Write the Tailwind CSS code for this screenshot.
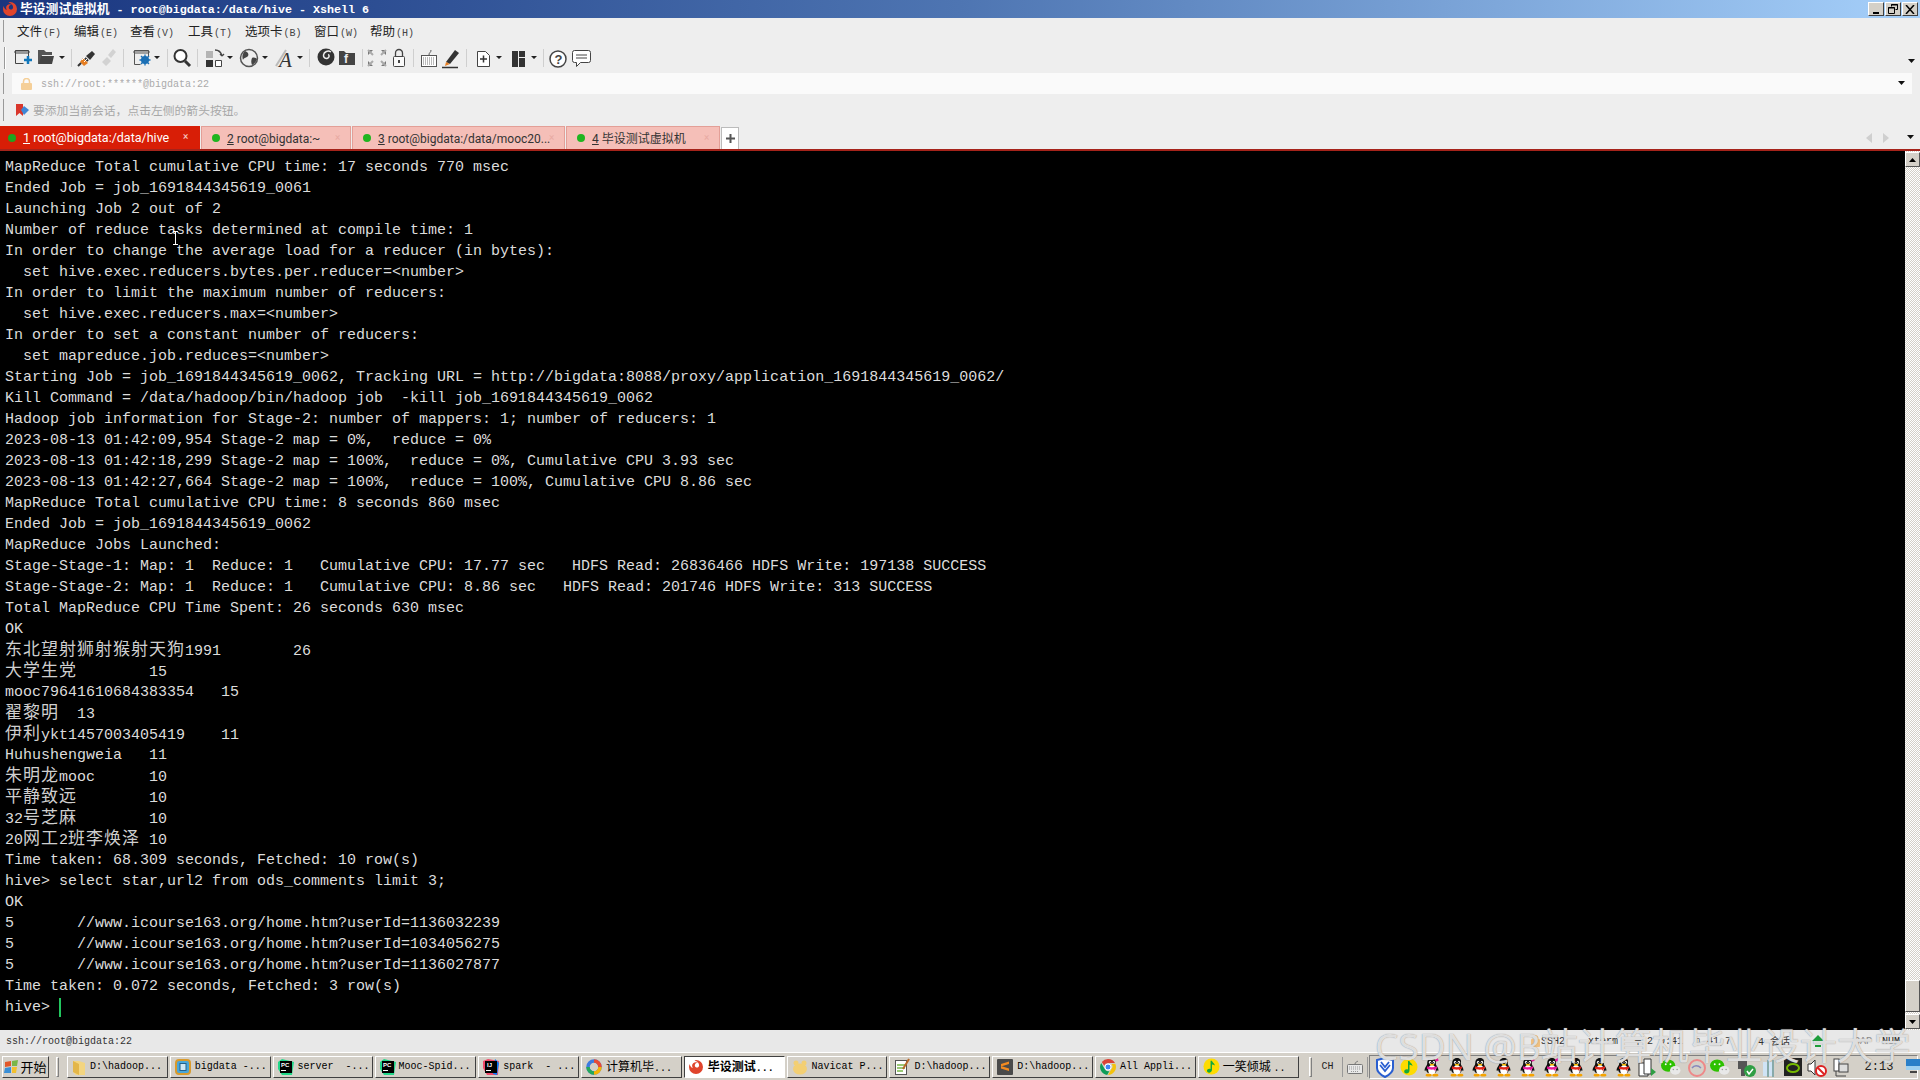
<!DOCTYPE html>
<html lang="en">
<head>
<meta charset="UTF-8">
<script src="https://cdn.jsdelivr.net/npm/@tailwindcss/browser@4"></script>
<title>Xshell 6</title>
</head>
<body class="bg-black overflow-hidden">

<svg width="0" height="0" class="absolute">
  <defs>
    <symbol id="xs" viewBox="0 0 16 16">
      <path d="M8 1a7 7 0 1 1-7 7c0-1 .3-2 .8-3 .2 2 1.200 3.400 3 4-1-1.500-1-3.500.4-4.800C6.600 3 9 3 10.400 4.300 9 3.800 7.600 4.200 7 5.400c-.6 1.300 0 2.600 1.300 3 1.500.4 2.700-.6 2.800-2 .1-2.400-2-4.400-4.600-4.600.5-.3 1-.8 1.500-.8z" fill="#e0442c"/>
    </symbol>
    <symbol id="qq" viewBox="0 0 20 22">
      <path d="M10 1c-3.500 0-5 2.600-5 5.500 0 1-.3 2-1 3-1.300 1.800-2 3.500-1.600 4.800.3.600 1 0 1.400-.6.300 1.200.8 2 1.600 2.800h8.200c.8-.8 1.300-1.600 1.600-2.800.4.600 1.100 1.200 1.400.6.400-1.300-.3-3-1.600-4.800-.7-1-1-2-1-3C15 3.600 13.500 1 10 1z" fill="#111"/>
      <ellipse cx="10" cy="13.500" rx="4" ry="5" fill="#fff"/>
      <ellipse cx="8" cy="5.500" rx="1.200" ry="1.600" fill="#fff"/><ellipse cx="12" cy="5.500" rx="1.200" ry="1.600" fill="#fff"/>
      <circle cx="8.300" cy="5.800" r=".6" fill="#000"/><circle cx="11.700" cy="5.800" r=".6" fill="#000"/>
      <ellipse cx="10" cy="8" rx="2.500" ry="1" fill="#f5b800"/>
      <path d="M5 9.800c3 1.200 7 1.200 10 0l.5 2c-.8.400-1.500.6-2 .7l.2 2.500-2-1.800c-1.300.2-2.600.2-3.700 0-.8-.1-1.800-.4-3.300-.9z" fill="#e1251b"/>
      <ellipse cx="6.500" cy="19" rx="3.200" ry="1.500" fill="#f5a300"/><ellipse cx="13.500" cy="19" rx="3.200" ry="1.500" fill="#f5a300"/>
    </symbol>
    <symbol id="qqp" viewBox="0 0 20 22">
      <path d="M10 1c-3.500 0-5 2.600-5 5.500 0 1-.3 2-1 3-1.300 1.800-2 3.500-1.600 4.800.3.600 1 0 1.400-.6.300 1.200.8 2 1.600 2.800h8.200c.8-.8 1.300-1.600 1.600-2.800.4.600 1.100 1.200 1.400.6.400-1.300-.3-3-1.600-4.800-.7-1-1-2-1-3C15 3.600 13.500 1 10 1z" fill="#111"/>
      <ellipse cx="10" cy="13.500" rx="4" ry="5" fill="#fff"/>
      <ellipse cx="8" cy="5.500" rx="1.200" ry="1.600" fill="#fff"/><ellipse cx="12" cy="5.500" rx="1.200" ry="1.600" fill="#fff"/>
      <circle cx="8.300" cy="5.800" r=".6" fill="#000"/><circle cx="11.700" cy="5.800" r=".6" fill="#000"/>
      <ellipse cx="10" cy="8" rx="2.500" ry="1" fill="#f5b800"/>
      <path d="M5 9.800c3 1.200 7 1.200 10 0l.5 2c-.8.400-1.500.6-2 .7l.2 2.500-2-1.800c-1.300.2-2.600.2-3.700 0-.8-.1-1.800-.4-3.300-.9z" fill="#e9189a"/>
      <path d="M13 3l3-2 1 3-3 1z" fill="#e9189a"/>
      <ellipse cx="6.500" cy="19" rx="3.200" ry="1.500" fill="#f5a300"/><ellipse cx="13.500" cy="19" rx="3.200" ry="1.500" fill="#f5a300"/>
    </symbol>
    <symbol id="wx" viewBox="0 0 22 20">
      <ellipse cx="8.500" cy="8" rx="7.500" ry="6.500" fill="#2dc100"/>
      <circle cx="6" cy="6.500" r="1" fill="#fff"/><circle cx="11" cy="6.500" r="1" fill="#fff"/>
      <ellipse cx="16" cy="13" rx="5.500" ry="4.500" fill="#e8e8e8"/>
      <circle cx="14" cy="12" r=".8" fill="#999"/><circle cx="18" cy="12" r=".8" fill="#999"/>
    </symbol>
    <symbol id="cr" viewBox="0 0 16 16">
      <path d="M8 0a8 8 0 0 1 7 4H8a4 4 0 0 0-3.800 2.700L1.800 3A8 8 0 0 1 8 0z" fill="#db4437"/>
      <path d="M15.300 4.800A8 8 0 0 1 8 16l3.300-5.700A4 4 0 0 0 11.500 5z" fill="#f4c20d"/>
      <path d="M1.200 3.900 4.700 10a4 4 0 0 0 4.800 2l-2.300 4A8 8 0 0 1 1.200 3.900z" fill="#0f9d58"/>
      <circle cx="8" cy="8" r="3" fill="#4285f4" stroke="#fff"/>
    </symbol>
    <symbol id="qm" viewBox="0 0 18 18">
      <circle cx="9" cy="9" r="8.500" fill="#fedb00"/>
      <path d="M8 3l1.500 0c.3 2 3 2.500 3 5-1-.8-2-1.200-3-1.200v5.700c0 1.800-1.500 3-3 3s-2.300-1-2.300-2c0-1.300 1.300-2.200 2.500-2.200.4 0 .8.100 1.300.3z" fill="#14a83b"/>
    </symbol>
  </defs>
</svg>

<div class="w-screen h-screen flex flex-col font-['Noto_Sans_CJK_SC','Noto_Sans',sans-serif]">

  <!-- title bar -->
  <div class="h-[18px] shrink-0 flex items-center bg-gradient-to-r from-[#1a357f] via-[#4e75b2] to-[#a6d0fa] relative">
    <svg width="16" height="16" class="ml-[2px]"><use href="#xs"/></svg>
    <span class="ml-[2px] text-white text-[12.800px] font-bold leading-none whitespace-pre">毕设测试虚拟机<span class="font-['Liberation_Mono',monospace] text-[11.700px]"> - root@bigdata:/data/hive - Xshell 6</span></span>
    <div class="ml-auto mr-[2px] flex gap-[1px]">
      <div class="w-[16px] h-[14px] bg-[#d4d0c8] border border-t-white border-l-white border-r-[#404040] border-b-[#404040] flex items-end justify-center pb-[1px]"><div class="w-[6px] h-[2px] bg-black"></div></div>
      <div class="w-[16px] h-[14px] bg-[#d4d0c8] border border-t-white border-l-white border-r-[#404040] border-b-[#404040] flex items-center justify-center">
        <svg width="10" height="10"><path d="M3.500 2.500V.5h6v5h-2M.5 3.500h6v6h-6z" fill="none" stroke="#000"/><path d="M3 1h7M0 4h7" stroke="#000"/></svg>
      </div>
      <div class="w-[16px] h-[14px] bg-[#d4d0c8] border border-t-white border-l-white border-r-[#404040] border-b-[#404040] flex items-center justify-center">
        <svg width="10" height="9"><path d="M1 0l8 9M9 0l-8 9" stroke="#000" stroke-width="1.500"/></svg>
      </div>
    </div>
  </div>

  <!-- menu -->
  <div class="h-[26px] shrink-0 bg-[#eeeeee] flex items-center text-[12.500px] text-[#222] relative">
    <div class="w-[2px] h-[22px] ml-[3px] mr-[12px] border-l border-[#999] border-r-white"></div>
    <span class="w-[57px]">文件<span class="ml-[1px] font-['Liberation_Mono',monospace] text-[10px] text-[#444]">(F)</span></span>
    <span class="w-[56px]">编辑<span class="ml-[1px] font-['Liberation_Mono',monospace] text-[10px] text-[#444]">(E)</span></span>
    <span class="w-[58px]">查看<span class="ml-[1px] font-['Liberation_Mono',monospace] text-[10px] text-[#444]">(V)</span></span>
    <span class="w-[57px]">工具<span class="ml-[1px] font-['Liberation_Mono',monospace] text-[10px] text-[#444]">(T)</span></span>
    <span class="w-[69px]">选项卡<span class="ml-[1px] font-['Liberation_Mono',monospace] text-[10px] text-[#444]">(B)</span></span>
    <span class="w-[56px]">窗口<span class="ml-[1px] font-['Liberation_Mono',monospace] text-[10px] text-[#444]">(W)</span></span>
    <span>帮助<span class="ml-[1px] font-['Liberation_Mono',monospace] text-[10px] text-[#444]">(H)</span></span>
  </div>

  <!-- toolbar -->
  <div class="h-[29px] shrink-0 bg-[#eeeeee] flex items-start relative">
    <svg width="620" height="26" class="shrink-0 mt-[1px]">
      <path d="M4.500 2v22" stroke="#999"/><path d="M5.500 2v22" stroke="#fff"/>
      <!-- separators -->
      <path d="M71.500 4v18M123.500 4v18M167.500 4v18M197.500 4v18M309.500 4v18M362.500 4v18M413.500 4v18M466.500 4v18M543.500 4v18" stroke="#cfcfcf"/>
      <!-- dropdown arrows -->
      <path d="M59 11h6l-3 3zM154 11h6l-3 3zM227 11h6l-3 3zM262 11h6l-3 3zM297 11h6l-3 3zM496 11h6l-3 3zM531 11h6l-3 3z" fill="#222"/>
      <!-- new session -->
      <path d="M15.500 5.500h13v7M15.500 5.500v13h8M15 6h14v2H15z" fill="none" stroke="#444"/>
      <path d="M24 15h8M28 11v8" stroke="#1177bb" stroke-width="2.500"/>
      <!-- open -->
      <path d="M38 5h6l2 2h6v3H42l-2 9h-2z" fill="#555"/><path d="M41 11h13l-2 8H39z" fill="#444"/>
      <!-- connect -->
      <path d="M80 17l4 4 4-3-5-5z" fill="#e67e22"/><path d="M86 11l4 4 5-6-3-3z" fill="#333"/><path d="M78 21l3-3M85 13l3 3" stroke="#333" stroke-width="2"/><path d="M84 17l3-3M82 15l3-3" stroke="#fff"/>
      <!-- disconnect -->
      <path d="M102 17l5-5 4 4-5 5zM108 10l5-6 3 3-5 6z" fill="#d2d2d2"/>
      <!-- properties -->
      <path d="M134.500 5.500h14v6M134.500 5.500v14h6M134 6h15v2h-15z" fill="none" stroke="#555"/>
      <circle cx="145" cy="15" r="4" fill="#1a6fb5"/><circle cx="145" cy="15" r="1.500" fill="#eee"/>
      <path d="M145 9.500v11M139.500 15h11M141 11l8 8M149 11l-8 8" stroke="#1a6fb5" stroke-width="1.300"/>
      <!-- find -->
      <circle cx="180.500" cy="11" r="6" fill="#fff" stroke="#333" stroke-width="2"/><path d="M185 16l5 5" stroke="#333" stroke-width="3"/>
      <!-- transfer -->
      <path d="M206 6h7v7h-7z" fill="#b4b4b4"/><path d="M206 15h7v7h-7z" fill="#333"/><path d="M215.500 15.500h6v6h-6z" fill="#fff" stroke="#444"/>
      <path d="M215 5c4 0 6 2 7 6M222 11l-2-2M222 11l2-2" fill="none" stroke="#444" stroke-width="1.300"/>
      <!-- globe -->
      <circle cx="249" cy="13" r="8.500" fill="#eee" stroke="#555" stroke-width="1.500"/>
      <path d="M245 6c3 1 4 3 3 5s-4 1-5 4c-1-3-1-6 2-9zM252 13c2-1 4 0 5 1-1 3-3 5-5 6-1-2-1-5 0-7z" fill="#444"/>
      <!-- font -->
      <path d="M276 21l10-16" stroke="#bbb" stroke-width="2"/><text x="279" y="22" font-family="Liberation Serif" font-style="italic" font-size="21" fill="#333">A</text>
      <!-- xshell -->
      <circle cx="326" cy="12" r="8.500" fill="#333"/><path d="M331 7c-3-2-7-.5-7.500 3-.3 2.500 2 4 4 3.300 1.800-.6 2.200-3 .7-4" fill="none" stroke="#eee" stroke-width="1.500"/>
      <!-- xftp -->
      <path d="M339 6h5l2 2h9v12h-16z" fill="#444"/><text x="344" y="18" font-family="Liberation Sans" font-size="12" font-weight="700" fill="#eee">f</text>
      <!-- fullscreen -->
      <path d="M368 5h5l-5 5zM386 5h-5l5 5zM368 21h5l-5-5zM386 21h-5l5-5z" fill="#777"/><path d="M368 5l5 5M386 5l-5 5M368 21l5-5M386 21l-5-5" stroke="#aaa" stroke-width="2"/>
      <!-- lock -->
      <rect x="393.500" y="11.500" width="11" height="10" rx="1" fill="#fafafa" stroke="#444"/><path d="M395.500 11V8a3.500 3.500 0 0 1 7 0v3" fill="none" stroke="#444" stroke-width="1.300"/><path d="M399 15v3" stroke="#444" stroke-width="2"/>
      <!-- keyboard -->
      <rect x="421.500" y="10.500" width="15" height="11" fill="#fff" stroke="#555"/><path d="M423 13h12M423 15h12M423 17h12M423 19h12" stroke="#777" stroke-dasharray="1 1"/><path d="M429 10c0-3 2-2 2-5" fill="none" stroke="#555"/>
      <!-- highlight -->
      <path d="M446 17l9-12 4 3-9 11z" fill="#333"/><path d="M446 17l4 2-5 2z" fill="#e67e22"/><path d="M442 22.500h16" stroke="#333" stroke-width="1.500"/>
      <!-- new tab -->
      <path d="M477.500 6.500h8l4 4v11h-12z" fill="#fff" stroke="#444"/><path d="M480 14h7M483.500 10.500v7" stroke="#333" stroke-width="1.500"/>
      <!-- layout -->
      <path d="M512 6h6v16h-6zM519 6h6v6h-6zM519 13h6v9h-6z" fill="#333"/>
      <!-- help -->
      <circle cx="558" cy="14" r="8" fill="#fff" stroke="#444" stroke-width="1.500"/><text x="554.500" y="18.500" font-family="Liberation Sans" font-size="13" font-weight="700" fill="#444">?</text>
      <!-- chat -->
      <path d="M574.500 5.500h14a2 2 0 0 1 2 2v8a2 2 0 0 1-2 2h-8l-4 4v-4h-2a2 2 0 0 1-2-2v-8a2 2 0 0 1 2-2z" fill="#fff" stroke="#444"/><path d="M576 10h11M576 13h11" stroke="#444"/>
    </svg>
    <svg width="8" height="5" class="ml-auto mr-[4px] mt-[15px]"><path d="M0 0h7L3.500 4z" fill="#111"/></svg>
  </div>

  <!-- address bar -->
  <div class="h-[21px] shrink-0 bg-[#eeeeee] flex relative">
    <div class="w-[2px] h-[21px] ml-[3px] mr-[7px] border-l border-[#999]"></div>
    <div class="w-[1900px] bg-[#fafafa] flex items-center pl-[9px]">
      <svg width="11" height="12"><rect y="5" width="11" height="7" rx="1" fill="#f5cf98"/><path d="M2.500 5V3.500a3 3 0 0 1 6 0V5" fill="none" stroke="#f5cf98" stroke-width="1.500"/></svg>
      <span class="ml-[9px] mt-[2px] font-['Liberation_Mono',monospace] text-[10px] text-[#aaaaaa]">ssh://root:******@bigdata:22</span>
      <svg width="8" height="5" class="ml-auto mr-[6px]"><path d="M0 0h7L3.500 4z" fill="#111"/></svg>
    </div>
  </div>

  <!-- bookmark hint -->
  <div class="h-[32px] shrink-0 bg-[#eeeeee] flex items-center">
    <div class="w-[2px] h-[22px] ml-[3px] mr-[11px] border-l border-[#999]"></div>
    <svg width="15" height="14" class="shrink-0"><path d="M0 1h7v12l-3.500-3L0 13z" fill="#d9362b"/><path d="M8 3l5 4-5 5-3-5z" fill="#3f87d6"/></svg>
    <span class="ml-[2px] text-[11.800px] text-[#a8a8a8]">要添加当前会话，点击左侧的箭头按钮。</span>
  </div>

  <!-- tabs -->
  <div class="h-[23px] shrink-0 bg-[#eeeeee] flex items-stretch text-[12px] font-['Roboto','Noto_Sans_CJK_SC',sans-serif] relative">
    <div class="w-[200px] bg-[#d81e06] text-white text-[12.500px] flex items-center pl-[8px] relative">
      <span class="w-[8px] h-[8px] rounded-full bg-[#1fa51f] mr-[7px]"></span><span class="mt-[2px]"><u>1</u> root@bigdata:/data/hive</span>
      <span class="absolute left-[183px] top-[3px] text-[10px] text-white/80">×</span>
    </div>
    <div class="ml-[1px] w-[150px] bg-[#f5bfb8] border border-b-0 border-[#e39f97] text-[#333] flex items-center pl-[10px] relative">
      <span class="w-[8px] h-[8px] rounded-full bg-[#1fb51f] mr-[7px]"></span><span class="mt-[2px]"><u>2</u> root@bigdata:~</span>
      <span class="absolute left-[133px] top-[3px] text-[10px] text-[#e8aaa3]">×</span>
    </div>
    <div class="ml-[1px] w-[213px] bg-[#f5bfb8] border border-b-0 border-[#e39f97] text-[#333] flex items-center pl-[10px] relative">
      <span class="w-[8px] h-[8px] rounded-full bg-[#1fb51f] mr-[7px]"></span><span class="mt-[2px]"><u>3</u> root@bigdata:/data/mooc20...</span>
      <span class="absolute left-[196px] top-[3px] text-[10px] text-[#e8aaa3]">×</span>
    </div>
    <div class="ml-[1px] w-[154px] bg-[#f5bfb8] border border-b-0 border-[#e39f97] text-[#333] flex items-center pl-[10px] relative">
      <span class="w-[8px] h-[8px] rounded-full bg-[#1fb51f] mr-[7px]"></span><span class="mt-[2px]"><u>4</u> 毕设测试虚拟机</span>
      <span class="absolute left-[137px] top-[3px] text-[10px] text-[#e8aaa3]">×</span>
    </div>
    <div class="ml-[1px] mt-[1px] w-[18px] bg-white border border-b-0 border-[#bbbbbb] flex items-center justify-center">
      <svg width="9" height="9"><path d="M4.500 0v9M0 4.500h9" stroke="#555" stroke-width="2"/></svg>
    </div>
    <div class="ml-auto flex items-center pr-[5px]">
      <svg width="6" height="10"><path d="M6 0v10L0 5z" fill="#cfcfcf"/></svg>
      <svg width="6" height="10" class="ml-[11px]"><path d="M0 0v10l6-5z" fill="#cfcfcf"/></svg>
      <svg width="8" height="5" class="ml-[18px]"><path d="M0 0h7L3.500 4z" fill="#111"/></svg>
    </div>
  </div>
  <div class="h-[2px] shrink-0 bg-[#a5231a]"></div>

  <!-- terminal -->
  <div class="flex-1 min-h-0 flex bg-black relative overflow-hidden">
    <div class="flex-1 pt-[6px] pl-[5px] font-['Liberation_Mono','Noto_Sans_CJK_SC',monospace] text-[15px] leading-[21px] text-[#dcdcdc]">
      <div class="h-[21px] whitespace-pre">MapReduce Total cumulative CPU time: 17 seconds 770 msec</div>
      <div class="h-[21px] whitespace-pre">Ended Job = job_1691844345619_0061</div>
      <div class="h-[21px] whitespace-pre">Launching Job 2 out of 2</div>
      <div class="h-[21px] whitespace-pre">Number of reduce tasks determined at compile time: 1</div>
      <div class="h-[21px] whitespace-pre">In order to change the average load for a reducer (in bytes):</div>
      <div class="h-[21px] whitespace-pre">  set hive.exec.reducers.bytes.per.reducer=&lt;number&gt;</div>
      <div class="h-[21px] whitespace-pre">In order to limit the maximum number of reducers:</div>
      <div class="h-[21px] whitespace-pre">  set hive.exec.reducers.max=&lt;number&gt;</div>
      <div class="h-[21px] whitespace-pre">In order to set a constant number of reducers:</div>
      <div class="h-[21px] whitespace-pre">  set mapreduce.job.reduces=&lt;number&gt;</div>
      <div class="h-[21px] whitespace-pre">Starting Job = job_1691844345619_0062, Tracking URL = http://bigdata:8088/proxy/application_1691844345619_0062/</div>
      <div class="h-[21px] whitespace-pre">Kill Command = /data/hadoop/bin/hadoop job  -kill job_1691844345619_0062</div>
      <div class="h-[21px] whitespace-pre">Hadoop job information for Stage-2: number of mappers: 1; number of reducers: 1</div>
      <div class="h-[21px] whitespace-pre">2023-08-13 01:42:09,954 Stage-2 map = 0%,  reduce = 0%</div>
      <div class="h-[21px] whitespace-pre">2023-08-13 01:42:18,299 Stage-2 map = 100%,  reduce = 0%, Cumulative CPU 3.93 sec</div>
      <div class="h-[21px] whitespace-pre">2023-08-13 01:42:27,664 Stage-2 map = 100%,  reduce = 100%, Cumulative CPU 8.86 sec</div>
      <div class="h-[21px] whitespace-pre">MapReduce Total cumulative CPU time: 8 seconds 860 msec</div>
      <div class="h-[21px] whitespace-pre">Ended Job = job_1691844345619_0062</div>
      <div class="h-[21px] whitespace-pre">MapReduce Jobs Launched:</div>
      <div class="h-[21px] whitespace-pre">Stage-Stage-1: Map: 1  Reduce: 1   Cumulative CPU: 17.77 sec   HDFS Read: 26836466 HDFS Write: 197138 SUCCESS</div>
      <div class="h-[21px] whitespace-pre">Stage-Stage-2: Map: 1  Reduce: 1   Cumulative CPU: 8.86 sec   HDFS Read: 201746 HDFS Write: 313 SUCCESS</div>
      <div class="h-[21px] whitespace-pre">Total MapReduce CPU Time Spent: 26 seconds 630 msec</div>
      <div class="h-[21px] whitespace-pre">OK</div>
      <div class="h-[21px] whitespace-pre -translate-y-px"><span class="text-[17px] tracking-[1px] leading-none text-[#cfcfcf] font-['Noto_Sans_CJK_SC']">东北望射狮射猴射天狗</span>1991        26</div>
      <div class="h-[21px] whitespace-pre -translate-y-px"><span class="text-[17px] tracking-[1px] leading-none text-[#cfcfcf] font-['Noto_Sans_CJK_SC']">大学生党</span>        15</div>
      <div class="h-[21px] whitespace-pre">mooc79641610684383354   15</div>
      <div class="h-[21px] whitespace-pre -translate-y-px"><span class="text-[17px] tracking-[1px] leading-none text-[#cfcfcf] font-['Noto_Sans_CJK_SC']">翟黎明</span>  13</div>
      <div class="h-[21px] whitespace-pre -translate-y-px"><span class="text-[17px] tracking-[1px] leading-none text-[#cfcfcf] font-['Noto_Sans_CJK_SC']">伊利</span>ykt1457003405419    11</div>
      <div class="h-[21px] whitespace-pre">Huhushengweia   11</div>
      <div class="h-[21px] whitespace-pre -translate-y-px"><span class="text-[17px] tracking-[1px] leading-none text-[#cfcfcf] font-['Noto_Sans_CJK_SC']">朱明龙</span>mooc      10</div>
      <div class="h-[21px] whitespace-pre -translate-y-px"><span class="text-[17px] tracking-[1px] leading-none text-[#cfcfcf] font-['Noto_Sans_CJK_SC']">平静致远</span>        10</div>
      <div class="h-[21px] whitespace-pre -translate-y-px">32<span class="text-[17px] tracking-[1px] leading-none text-[#cfcfcf] font-['Noto_Sans_CJK_SC']">号芝麻</span>        10</div>
      <div class="h-[21px] whitespace-pre -translate-y-px">20<span class="text-[17px] tracking-[1px] leading-none text-[#cfcfcf] font-['Noto_Sans_CJK_SC']">网工</span>2<span class="text-[17px] tracking-[1px] leading-none text-[#cfcfcf] font-['Noto_Sans_CJK_SC']">班李焕泽</span> 10</div>
      <div class="h-[21px] whitespace-pre">Time taken: 68.309 seconds, Fetched: 10 row(s)</div>
      <div class="h-[21px] whitespace-pre">hive&gt; select star,url2 from ods_comments limit 3;</div>
      <div class="h-[21px] whitespace-pre">OK</div>
      <div class="h-[21px] whitespace-pre">5       //www.icourse163.org/home.htm?userId=1136032239</div>
      <div class="h-[21px] whitespace-pre">5       //www.icourse163.org/home.htm?userId=1034056275</div>
      <div class="h-[21px] whitespace-pre">5       //www.icourse163.org/home.htm?userId=1136027877</div>
      <div class="h-[21px] whitespace-pre">Time taken: 0.072 seconds, Fetched: 3 row(s)</div>
      <div class="h-[21px] flex whitespace-pre">hive&gt; <span class="w-[2px] h-[19px] mt-[1px] bg-[#22c55e]"></span></div>
    </div>
    <!-- mouse cursor over the text -->
    <svg width="7" height="14" class="absolute left-[172px] top-[80px]"><path d="M3.500 0v14M1 .5h5M1 13.500h5" stroke="#fff"/></svg>

    <!-- scrollbar -->
    <div class="w-[15px] shrink-0 flex flex-col bg-[repeating-conic-gradient(#d4d0c8_0_25%,#fff_0_50%)] bg-size-[2px_2px]">
      <div class="h-[15px] mt-[1px] bg-[#d4d0c8] border border-t-white border-l-white border-r-[#555] border-b-[#555] flex items-center justify-center">
        <svg width="7" height="4"><path d="M3.500 0L7 4H0z" fill="#000"/></svg>
      </div>
      <div class="mt-auto h-[32px] bg-[#d4d0c8] border border-t-white border-l-white border-r-[#555] border-b-[#555]"></div>
      <div class="h-[15px] mt-[2px] mb-[1px] bg-[#d4d0c8] border border-t-white border-l-white border-r-[#555] border-b-[#555] flex items-center justify-center">
        <svg width="7" height="4"><path d="M0 0h7L3.500 4z" fill="#000"/></svg>
      </div>
    </div>
  </div>

  <!-- status bar -->
  <div class="h-[22px] shrink-0 bg-[#e8e8e8] flex items-center font-['Liberation_Mono',monospace] text-[10px] text-[#333] relative">
    <span class="ml-[6px] w-[1525px]">ssh://root@bigdata:22</span>
    <svg width="9" height="12"><rect y="4" width="9" height="8" rx="1" fill="#f0c080"/><path d="M2 4V3a2.500 2.500 0 0 1 5 0v1" fill="none" stroke="#f0c080"/></svg>
    <span class="ml-[1px] w-[47px]">SSH2</span>
    <span class="w-[47px]">xterm</span>
    <span class="w-[60px]">┬ 2 0:41</span>
    <span class="w-[63px]">▯ 41,7</span>
    <span class="w-[54px]">4 <span class="font-['Noto_Sans_CJK_SC']">会话</span></span>
    <svg width="12" height="12" class="mr-[30px]"><path d="M6 0l6 6H8v2H4V6H0zM3 10h6v2H3z" fill="#1f9d3a"/></svg>
    <span class="w-[28px] text-[#888]">CAP</span>
    <span class="text-[#222]">NUM</span>
  </div>

  <!-- taskbar -->
  <div class="h-[28px] shrink-0 bg-[#d4d0c8] border-t border-white flex items-center font-['Liberation_Mono','Noto_Sans_CJK_SC',monospace] text-[10px] text-black">
    <div class="ml-[2px] w-[47px] h-[22px] shrink-0 whitespace-nowrap bg-[#d4d0c8] border border-t-white border-l-white border-r-[#404040] border-b-[#404040] flex items-center justify-center gap-[1px] font-['Noto_Sans_CJK_SC'] text-[13px]">
      <svg width="15" height="14" class="shrink-0"><path d="M1 2l6-1 0 5-6 1z" fill="#e2582a"/><path d="M8 1l6-1-1 6-5 0z" fill="#7ab648"/><path d="M1 8l6-1 0 6-7 0z" fill="#3a8fd6"/><path d="M8 7l5 0-1 6-4 0z" fill="#f2c02e"/></svg><span>开始</span>
    </div>
    <div class="w-[3px] h-[20px] shrink-0 ml-[7px] mr-[8px] border border-t-white border-l-white border-r-[#808080] border-b-[#808080]"></div>

    <div class="flex gap-[2px] shrink-0">
      <div class="w-[100.800px] h-[22px] border border-t-white border-l-white border-r-[#404040] border-b-[#404040] flex items-center pl-[4px]">
        <svg width="14" height="16" class="mr-[4px] shrink-0"><path d="M1 2h6l6 2v12H4l-3-3z" fill="#f3d580"/><path d="M1 2l6 3v11l-6-3z" fill="#e3b64a"/></svg><span>D:\hadoop...</span>
      </div>
      <div class="w-[100.800px] h-[22px] border border-t-white border-l-white border-r-[#404040] border-b-[#404040] flex items-center pl-[4px]">
        <svg width="16" height="16" class="mr-[4px] shrink-0"><rect x="1" y="1" width="14" height="14" rx="3" fill="#4aa6d8" stroke="#d99a2b" stroke-width="2"/><rect x="5" y="4.500" width="6" height="7" fill="#cfe8f5" stroke="#23618a"/></svg><span>bigdata -...</span>
      </div>
      <div class="w-[100.800px] h-[22px] border border-t-white border-l-white border-r-[#404040] border-b-[#404040] flex items-center pl-[4px]">
        <svg width="16" height="16" class="mr-[4px] shrink-0"><path d="M0 3l4-3 12 3-2 13-10 0-4-6z" fill="#21d789"/><rect x="2" y="2" width="12" height="12" fill="#000"/><text x="3" y="8" font-family="Liberation Sans" font-weight="700" font-size="6" fill="#fff">PC</text><path d="M3 11.500h5" stroke="#fff"/></svg><span class="whitespace-pre">server  -...</span>
      </div>
      <div class="w-[100.800px] h-[22px] border border-t-white border-l-white border-r-[#404040] border-b-[#404040] flex items-center pl-[4px]">
        <svg width="16" height="16" class="mr-[2px] shrink-0"><path d="M0 3l4-3 12 3-2 13-10 0-4-6z" fill="#21d789"/><rect x="2" y="2" width="12" height="12" fill="#000"/><text x="3" y="8" font-family="Liberation Sans" font-weight="700" font-size="6" fill="#fff">PC</text><path d="M3 11.500h5" stroke="#fff"/></svg><span>Mooc-Spid...</span>
      </div>
      <div class="w-[100.800px] h-[22px] border border-t-white border-l-white border-r-[#404040] border-b-[#404040] flex items-center pl-[4px]">
        <svg width="16" height="16" class="mr-[4px] shrink-0"><path d="M0 2l5-2 11 2-1 14-11 0-4-7z" fill="#f04a6a"/><path d="M12 0l4 4-2 12-4-1z" fill="#087cfa"/><rect x="2" y="2" width="12" height="12" fill="#000"/><text x="4" y="8" font-family="Liberation Sans" font-weight="700" font-size="6" fill="#fff">IJ</text><path d="M3 11.500h5" stroke="#fff"/></svg><span class="whitespace-pre">spark  - ...</span>
      </div>
      <div class="w-[100.800px] h-[22px] border border-t-white border-l-white border-r-[#404040] border-b-[#404040] flex items-center pl-[4px]">
        <svg width="16" height="16" class="mr-[4px] shrink-0"><circle cx="8" cy="8" r="6" fill="none" stroke="#3d7be0" stroke-width="3.500"/><path d="M8 2a6 6 0 0 1 6 6" fill="none" stroke="#e94b35" stroke-width="3.500"/><path d="M14 8a6 6 0 0 1-6 6" fill="none" stroke="#f5b400" stroke-width="3.500"/><path d="M8 14a6 6 0 0 1-6-6" fill="none" stroke="#25a85a" stroke-width="3.500"/></svg><span class="font-['Noto_Sans_CJK_SC'] text-[12px]">计算机毕<span class="font-['Liberation_Mono'] text-[10px]">...</span></span>
      </div>
      <div class="w-[100.800px] h-[22px] bg-white border border-t-[#404040] border-l-[#404040] border-r-white border-b-white flex items-center pl-[3px]">
        <svg width="16" height="16" class="mr-[4px] shrink-0"><use href="#xs"/></svg><span class="font-['Noto_Sans_CJK_SC'] text-[12px] font-bold">毕设测试<span class="font-['Liberation_Mono'] text-[10px]">...</span></span>
      </div>
      <div class="w-[100.800px] h-[22px] border border-t-white border-l-white border-r-[#404040] border-b-[#404040] flex items-center pl-[4px]">
        <svg width="16" height="16" class="mr-[4px] shrink-0"><ellipse cx="8" cy="10" rx="7" ry="5.500" fill="#f3cf73"/><circle cx="4" cy="4" r="2.500" fill="#f3cf73"/><circle cx="12" cy="4" r="2.500" fill="#f3cf73"/></svg><span>Navicat P...</span>
      </div>
      <div class="w-[100.800px] h-[22px] border border-t-white border-l-white border-r-[#404040] border-b-[#404040] flex items-center pl-[4px]">
        <svg width="16" height="18" class="mr-[4px] shrink-0"><rect x="1.500" y="2.500" width="11" height="14" fill="#fff" stroke="#555"/><path d="M3 7h8M3 10h8M3 13h6" stroke="#7ab648" stroke-width="1.500"/><path d="M15 1l-6 10" stroke="#b8692a" stroke-width="2"/></svg><span>D:\hadoop...</span>
      </div>
      <div class="w-[100.800px] h-[22px] border border-t-white border-l-white border-r-[#404040] border-b-[#404040] flex items-center pl-[4px]">
        <svg width="16" height="18" class="mr-[4px] shrink-0"><rect y="1" width="16" height="16" rx="1" fill="#4a4a4a"/><path d="M4 6l8-2.500v2.500L4 8.500zM4 8l8 2.500V13L4 10.500z" fill="#f28a20"/></svg><span>D:\hadoop...</span>
      </div>
      <div class="w-[100.800px] h-[22px] border border-t-white border-l-white border-r-[#404040] border-b-[#404040] flex items-center pl-[4px]">
        <svg width="16" height="16" class="mr-[4px] shrink-0"><use href="#cr"/></svg><span>All Appli...</span>
      </div>
      <div class="w-[100.800px] h-[22px] border border-t-white border-l-white border-r-[#404040] border-b-[#404040] flex items-center pl-[4px]">
        <svg width="17" height="17" class="mr-[3px] shrink-0"><use href="#qm"/></svg><span class="font-['Noto_Sans_CJK_SC'] text-[12px] whitespace-nowrap">一笑倾城 <span class="font-['Liberation_Mono'] text-[10px]">..</span></span>
      </div>
    </div>

    <div class="w-[3px] h-[20px] shrink-0 ml-[10px] border border-t-white border-l-white border-r-[#808080] border-b-[#808080]"></div>
    <span class="ml-[10px] shrink-0 text-[#222] w-[18px]">CH</span>
    <div class="w-[1px] h-[20px] shrink-0 ml-[2px] bg-[#999]"></div>
    <svg width="16" height="14" class="ml-[4px] shrink-0"><rect x=".5" y="4.500" width="15" height="9" rx="1" fill="#e8e8e8" stroke="#777"/><path d="M2 7h12M2 9h12M4 11.500h8" stroke="#999" stroke-dasharray="1 1"/><path d="M8 4c0-2 2-2 3-3" fill="none" stroke="#777"/></svg>
    <div class="w-[1px] h-[20px] shrink-0 ml-[4px] bg-[#999]"></div>

    <!-- tray -->
    <div class="ml-[1px] h-[24px] flex-1 min-w-0 mr-[2px] border border-t-[#808080] border-l-[#808080] border-r-white border-b-white flex items-center">
      <svg width="481" height="22" class="shrink-0">
        <path d="M7 4l8-2 8 2v8c0 4-4 7-8 9-4-2-8-5-8-9z" fill="#fff" stroke="#2a5fd0" stroke-width="2"/><path d="M10 9l5 6 5-6M11 6l4 5 4-5" fill="none" stroke="#2a5fd0" stroke-width="1.800"/>
        <use href="#qm" x="30" y="2" width="18" height="18"/>
        <use href="#qqp" x="52" y="1" width="20" height="21"/>
        <use href="#qq" x="77" y="1" width="20" height="21"/>
        <use href="#qq" x="100" y="1" width="20" height="21"/>
        <use href="#qq" x="124" y="1" width="20" height="21"/>
        <use href="#qqp" x="148" y="1" width="20" height="21"/>
        <use href="#qqp" x="172" y="1" width="20" height="21"/>
        <use href="#qq" x="196" y="1" width="20" height="21"/>
        <use href="#qq" x="220" y="1" width="20" height="21"/>
        <use href="#qq" x="244" y="1" width="20" height="21"/>
        <!-- copy -->
        <path d="M269 7h9v13h-9z" fill="#fff" stroke="#333"/><path d="M274 3h7v15h-7z" fill="#fff" stroke="#333"/><path d="M281 12l5 4-5 4z" fill="#2f9e44"/>
        <use href="#wx" x="290" y="2" width="21" height="19"/>
        <circle cx="327" cy="12" r="8" fill="none" stroke="#e88" stroke-width="2"/><path d="M322 12c2-3 6-3 9 0" fill="none" stroke="#88b" stroke-width="1.500"/>
        <use href="#wx" x="339" y="2" width="21" height="19"/>
        <!-- plug + check -->
        <path d="M368 4h9v9h-2v7h-4v-7h-3z" fill="#555"/><circle cx="380" cy="15" r="6" fill="#2f9e44"/><path d="M377 15l2 3 4-5" fill="none" stroke="#fff" stroke-width="1.500"/>
        <!-- file -->
        <rect x="393" y="6" width="11" height="14" fill="#cfe3f5"/><path d="M398 4v17M403 4v17" stroke="#8aa" stroke-width="2"/>
        <!-- nvidia -->
        <rect x="414" y="2" width="18" height="18" fill="#222"/><ellipse cx="423" cy="12" rx="6" ry="4" fill="none" stroke="#76b900" stroke-width="2"/>
        <!-- sound muted -->
        <path d="M438 8h3l4-4v15l-4-4h-3z" fill="#fff" stroke="#333"/><circle cx="451" cy="15" r="5" fill="#fff" stroke="#dd2222" stroke-width="2"/><path d="M447.500 11.500l7 7" stroke="#dd2222" stroke-width="2"/>
        <!-- network -->
        <rect x="464" y="3" width="5" height="12" fill="#fff" stroke="#444"/><rect x="469" y="8" width="9" height="8" fill="#ddd" stroke="#444"/><path d="M466 15v5h10" fill="none" stroke="#444"/>
      </svg>
      <span class="ml-[14px] shrink-0 text-[12px] w-[29px] text-[#222] whitespace-nowrap">2:13</span>
      <svg width="15" height="15" class="ml-[12px] shrink-0"><rect width="15" height="11" fill="#2a7fc8"/><path d="M0 7h15v4H0z" fill="#9fd0f0"/><path d="M4 13h7" stroke="#444" stroke-width="2"/></svg>
    </div>
  </div>
</div>

<!-- watermark -->
<div class="absolute left-[1375px] top-[1024px] whitespace-nowrap text-[37px] leading-[44px] text-white/75 font-['Noto_Sans','Noto_Sans_CJK_SC',sans-serif] [text-shadow:0_0_1px_#777] pointer-events-none">CSDN @B站计算机毕业设计大学</div>

</body>
</html>
